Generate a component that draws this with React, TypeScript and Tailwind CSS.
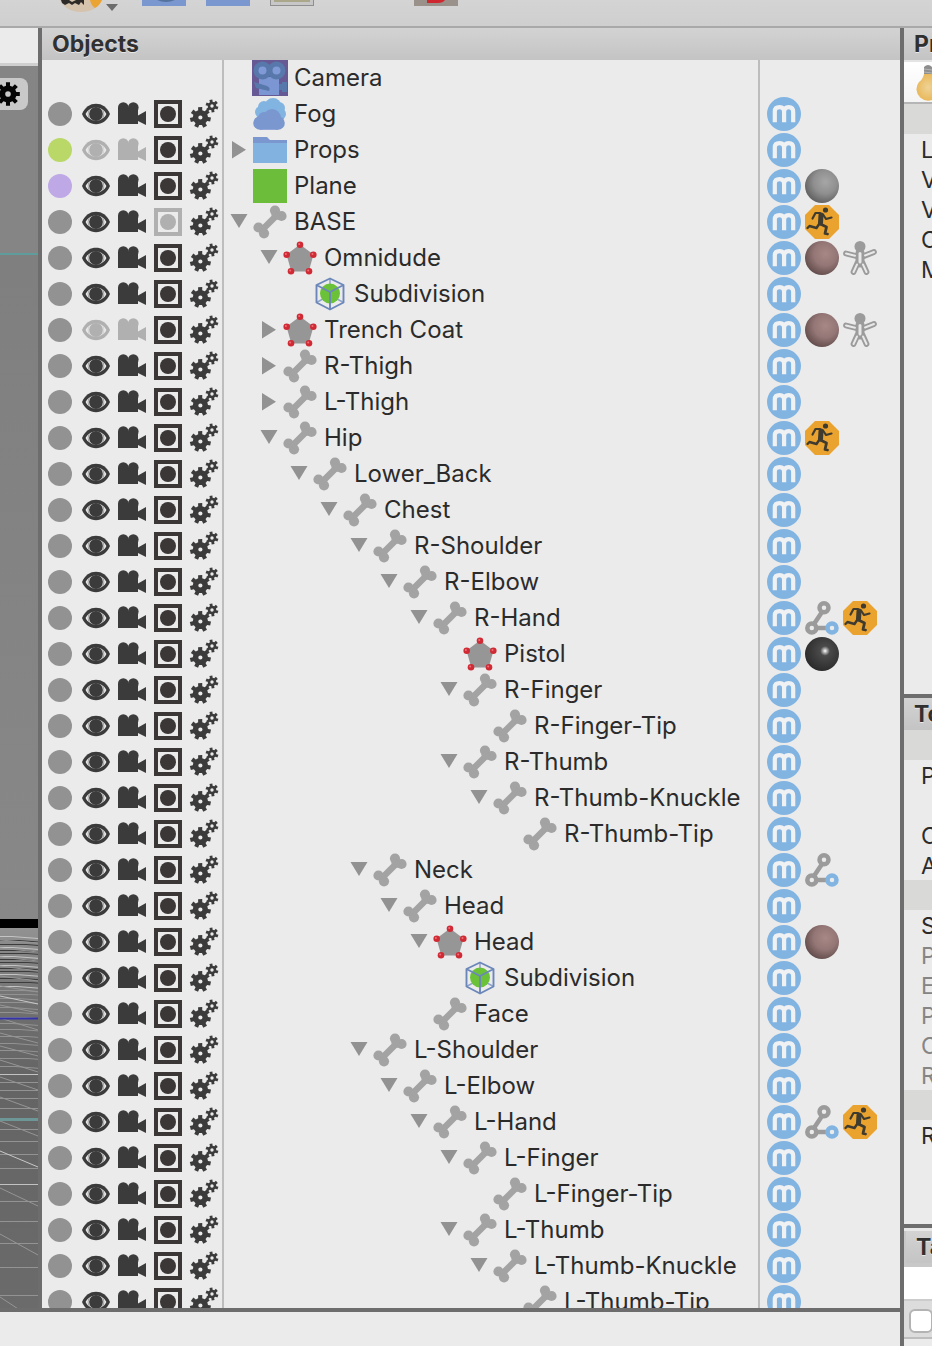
import React from "react";

type Kind = "camera" | "fog" | "folder" | "plane" | "bone" | "mesh" | "subdivision";
type Tag = "m" | "gray" | "skin" | "black" | "run" | "rig" | "ik";
type Item = {
  name: string;
  kind: Kind;
  level: number;
  arrow?: "open" | "closed";
  tags?: Tag[];
  dot?: "green" | "purple";
  hidden?: boolean;
  inactive?: boolean;
  plain?: boolean;
};

const items: Item[] = [
  { name: "Camera", kind: "camera", level: 0, plain: true },
  { name: "Fog", kind: "fog", level: 0 },
  { name: "Props", kind: "folder", level: 0, arrow: "closed", dot: "green", hidden: true },
  { name: "Plane", kind: "plane", level: 0, dot: "purple", tags: ["gray"] },
  { name: "BASE", kind: "bone", level: 0, arrow: "open", inactive: true, tags: ["run"] },
  { name: "Omnidude", kind: "mesh", level: 1, arrow: "open", tags: ["skin", "rig"] },
  { name: "Subdivision", kind: "subdivision", level: 2 },
  { name: "Trench Coat", kind: "mesh", level: 1, arrow: "closed", hidden: true, tags: ["skin", "rig"] },
  { name: "R-Thigh", kind: "bone", level: 1, arrow: "closed" },
  { name: "L-Thigh", kind: "bone", level: 1, arrow: "closed" },
  { name: "Hip", kind: "bone", level: 1, arrow: "open", tags: ["run"] },
  { name: "Lower_Back", kind: "bone", level: 2, arrow: "open" },
  { name: "Chest", kind: "bone", level: 3, arrow: "open" },
  { name: "R-Shoulder", kind: "bone", level: 4, arrow: "open" },
  { name: "R-Elbow", kind: "bone", level: 5, arrow: "open" },
  { name: "R-Hand", kind: "bone", level: 6, arrow: "open", tags: ["ik", "run"] },
  { name: "Pistol", kind: "mesh", level: 7, tags: ["black"] },
  { name: "R-Finger", kind: "bone", level: 7, arrow: "open" },
  { name: "R-Finger-Tip", kind: "bone", level: 8 },
  { name: "R-Thumb", kind: "bone", level: 7, arrow: "open" },
  { name: "R-Thumb-Knuckle", kind: "bone", level: 8, arrow: "open" },
  { name: "R-Thumb-Tip", kind: "bone", level: 9 },
  { name: "Neck", kind: "bone", level: 4, arrow: "open", tags: ["ik"] },
  { name: "Head", kind: "bone", level: 5, arrow: "open" },
  { name: "Head", kind: "mesh", level: 6, arrow: "open", tags: ["skin"] },
  { name: "Subdivision", kind: "subdivision", level: 7 },
  { name: "Face", kind: "bone", level: 6 },
  { name: "L-Shoulder", kind: "bone", level: 4, arrow: "open" },
  { name: "L-Elbow", kind: "bone", level: 5, arrow: "open" },
  { name: "L-Hand", kind: "bone", level: 6, arrow: "open", tags: ["ik", "run"] },
  { name: "L-Finger", kind: "bone", level: 7, arrow: "open" },
  { name: "L-Finger-Tip", kind: "bone", level: 8 },
  { name: "L-Thumb", kind: "bone", level: 7, arrow: "open" },
  { name: "L-Thumb-Knuckle", kind: "bone", level: 8, arrow: "open" },
  { name: "L-Thumb-Tip", kind: "bone", level: 9 },
];

function gearPath(cx: number, cy: number, teeth: number, outer: number, inner: number, hole: number, turn = 0) {
  const step = (Math.PI * 2) / teeth;
  const pts: string[] = [];
  for (let i = 0; i < teeth; i++) {
    const a = i * step + turn;
    const corners: [number, number][] = [
      [inner, a - step * 0.3],
      [outer, a - step * 0.22],
      [outer, a + step * 0.22],
      [inner, a + step * 0.3],
    ];
    corners.forEach(([r, t]) => pts.push(`${(cx + r * Math.cos(t)).toFixed(2)} ${(cy + r * Math.sin(t)).toFixed(2)}`));
  }
  return `M${pts.join("L")}ZM${cx + hole} ${cy}a${hole} ${hole} 0 1 0 ${-2 * hole} 0a${hole} ${hole} 0 1 0 ${2 * hole} 0Z`;
}

const bigGear = gearPath(10.4, 17.5, 7, 10.6, 7.6, 2.1, 0.2);
const smallGear = gearPath(22, 6, 6, 6.5, 4.3, 1.7, 0.35);
const viewGear = gearPath(8, 16, 8, 12, 8.5, 2.8);

function EyeIcon() {
  return (
    <svg viewBox="0 0 28 28" className="size-7">
      <path d="M0 14C3 7 8 3.800 14 3.800s11 3.200 14 10.200c-3 7-8 10.200-14 10.200S3 21 0 14Z" fill="currentColor" />
      <path d="M3.600 14c1.800-4 5.400-6.600 10.400-6.600s8.600 2.600 10.400 6.600c-1.800 4-5.400 6.600-10.400 6.600S5.400 18 3.600 14Z" fill="#ebebeb" />
      <circle cx="14" cy="14" r="7.900" fill="none" stroke="currentColor" strokeWidth="0.700" opacity="0.600" />
      <circle cx="14" cy="14" r="6.900" fill="currentColor" />
    </svg>
  );
}

function FilmIcon() {
  return (
    <svg viewBox="0 0 28 28" className="size-7" fill="currentColor">
      <circle cx="5.300" cy="7.500" r="5.300" />
      <circle cx="15.300" cy="7.500" r="5.300" />
      <path d="M0 8h20v7.500l8-4.500v14l-8-4v3H0Z" />
    </svg>
  );
}

function RenderIcon() {
  return (
    <svg viewBox="0 0 28 28" className="size-7">
      <rect x="2" y="2" width="24" height="24" fill="none" stroke="currentColor" strokeWidth="4" />
      <circle cx="14" cy="14" r="8" fill="currentColor" />
    </svg>
  );
}

function GearsIcon() {
  return (
    <svg viewBox="0 0 28 28" className="size-7 overflow-visible" fill="currentColor" fillRule="evenodd">
      <path d={bigGear} />
      <path d={smallGear} />
    </svg>
  );
}

function KindIcon({ kind }: { kind: Kind }) {
  const box = "size-9 shrink-0";
  if (kind === "camera")
    return (
      <svg viewBox="0 0 36 36" className={box}>
        <rect width="36" height="36" fill="#675a94" />
        <path d="M7 17h20v18H7Z" fill="#7b96d2" />
        <circle cx="10.500" cy="10.500" r="9" fill="#5877ab" />
        <circle cx="24.500" cy="10.500" r="9" fill="#5877ab" />
        <circle cx="10.500" cy="10.500" r="4" fill="#7f9ad6" />
        <circle cx="24.500" cy="10.500" r="4" fill="#7f9ad6" />
        <path d="M2 22l13 4q4 2 2 5l-13-3ZM27 24h3v-2h5v10h-5v-2h-3Z" fill="#5877ab" />
      </svg>
    );
  if (kind === "fog")
    return (
      <svg viewBox="0 0 36 36" className={box}>
        <g fill="#82b4e1">
          <circle cx="21" cy="10.500" r="8.500" />
          <circle cx="12" cy="11" r="6" />
          <circle cx="9" cy="16" r="6" />
          <circle cx="27" cy="12" r="6" />
          <circle cx="28" cy="18" r="6" />
          <path d="M10 10h18v12H10Z" />
        </g>
        <g fill="#7b97d0">
          <circle cx="20" cy="22" r="9" />
          <circle cx="12" cy="22" r="6" />
          <circle cx="8" cy="27" r="6.800" />
          <circle cx="26" cy="27" r="6.800" />
          <path d="M8 24h18v9.800H8Z" />
        </g>
      </svg>
    );
  if (kind === "folder")
    return (
      <svg viewBox="0 0 36 36" className={box}>
        <path d="M1 5h14l3 3h17v8H1Z" fill="#7b97d0" />
        <path d="M1 11h34v20H1Z" fill="#82b2e0" />
      </svg>
    );
  if (kind === "plane")
    return (
      <svg viewBox="0 0 36 36" className={box}>
        <rect x="1" y="1" width="34" height="34" fill="#6bbd3a" />
      </svg>
    );
  if (kind === "bone")
    return (
      <svg viewBox="0 0 36 36" className={box} fill="#a3a3a3">
        <circle cx="23" cy="6.500" r="5.100" />
        <circle cx="29.500" cy="12" r="5.100" />
        <circle cx="6.500" cy="23.500" r="5.100" />
        <circle cx="12" cy="29.300" r="5.100" />
        <path d="M26 10L10 26" stroke="#a3a3a3" strokeWidth="6.500" />
        <path d="M22 6l8 7-5 3-6-5ZM14 20l-7 3 5 7 3-6Z" />
      </svg>
    );
  if (kind === "mesh")
    return (
      <svg viewBox="0 0 36 36" className={box}>
        <path d="M18 4.500L31.500 14.500l-4.800 17h-17.400L4.500 14.500Z" fill="#969696" />
        {[[18, 4.700], [4.700, 14.700], [31.300, 14.700], [9, 31.200], [27, 31.200]].map(([x, y]) => (
          <g key={x}>
            <circle cx={x} cy={y} r="3.300" fill="#d02a35" />
            <circle cx={x - 0.8} cy={y - 0.8} r="1" fill="#ef7078" />
          </g>
        ))}
      </svg>
    );
  return (
    <svg viewBox="0 0 36 36" className={box}>
      <path d="M18 2.500V17M4.500 26.500L18 19l13.500 7.500" stroke="#8ea3cc" strokeWidth="1.500" fill="none" />
      <circle cx="18" cy="17.500" r="10" fill="#6bc238" />
      <path d="M18 2.500L31.500 9v17.500L18 33.500 4.500 26.500V9ZM4.500 9L18 16l13.500-7M18 16v17.500" fill="none" stroke="#6b87ba" strokeWidth="1.900" strokeLinejoin="round" />
    </svg>
  );
}

function TagIcon({ tag }: { tag: Tag }) {
  const box = "h-[34px] w-[34px] shrink-0";
  if (tag === "m")
    return (
      <svg viewBox="0 0 34 34" className={box}>
        <circle cx="17" cy="17" r="17" fill="#82b4e2" />
        <path d="M7.800 25.300V14.500q0-4.300 4.800-4.300q4.500 0 4.500 4.800v10.300M17.100 25.300V15q0-4.800 4.600-4.800q4.500 0 4.500 4.800v10.300" fill="none" stroke="#f0f1f2" strokeWidth="4.200" />
      </svg>
    );
  if (tag === "gray")
    return <span className="h-[34px] w-[34px] shrink-0 rounded-full bg-[radial-gradient(circle_at_60%_38%,#a6a6a6_0%,#8f8f8f_40%,#6a6a6a_68%,#484848_100%)]" />;
  if (tag === "skin")
    return <span className="h-[34px] w-[34px] shrink-0 rounded-full bg-[radial-gradient(circle_at_60%_38%,#a88887_0%,#937675_40%,#6d5655_68%,#3f3232_100%)]" />;
  if (tag === "black")
    return <span className="h-[34px] w-[34px] shrink-0 rounded-full bg-[radial-gradient(circle_at_59%_41%,#ffffff_0%,#b0b0b0_7%,#4a4a4a_17%,#383838_50%,#1c1c1c_100%)]" />;
  if (tag === "run")
    return (
      <svg viewBox="0 0 34 34" className={box}>
        <path d="M10 0h14l10 10v14L24 34H10L0 24V10Z" fill="#eaa32f" />
        <circle cx="20.500" cy="5" r="2.600" fill="#3f3b2f" />
        <g fill="none" stroke="#3f3b2f" strokeWidth="2.200" strokeLinecap="round" strokeLinejoin="round">
          <path d="M15 8L10.500 8 7.500 13.500" />
          <path d="M18 9.500l3 4.500 5.500-1.500" />
          <path d="M15.500 19l6 3-1.500 6.500 2.500 0.500" strokeWidth="2.800" />
          <path d="M14.500 18.500l-3 4.500-7-2-2 2" strokeWidth="2.400" />
          <path d="M16 10L15.500 18" strokeWidth="5" />
        </g>
      </svg>
    );
  if (tag === "rig")
    return (
      <svg viewBox="0 0 34 34" className={box} fill="none" strokeLinecap="round">
        <circle cx="17" cy="5.500" r="5.500" fill="#9b9b9b" />
        <path d="M3 12.500l10 2.500M31 11L21 15M14.500 22l-4 9M19.500 22l4 9" stroke="#9b9b9b" strokeWidth="5.800" />
        <path d="M17 12v10" stroke="#9b9b9b" strokeWidth="9" />
        <path d="M3 12.500l9 2.200M31 11L22 14.500M14 23.500l-3.500 7.500M20 23.500l3.500 7.500" stroke="#e8e8e8" strokeWidth="2" />
        <path d="M17 12.500v8.500" stroke="#e8e8e8" strokeWidth="3" />
      </svg>
    );
  return (
    <svg viewBox="0 0 34 34" className={box} fill="none" strokeWidth="4.500">
      <path d="M17 11L9 23M11 27h12" stroke="#9b9b9b" />
      <circle cx="19" cy="6.800" r="4.500" stroke="#9b9b9b" />
      <circle cx="6.800" cy="27" r="4.500" stroke="#9b9b9b" />
      <circle cx="27" cy="27" r="4.500" stroke="#82b4e2" />
    </svg>
  );
}

function ObjectRow({ item }: { item: Item }) {
  const visibility = item.hidden ? "text-[#b0b0b0]" : "text-[#3b3b3b]";
  const render = item.inactive ? "text-[#b0b0b0]" : "text-[#3b3737]";
  const dot = item.dot === "green" ? "bg-[#b9d867]" : item.dot === "purple" ? "bg-[#bea8e6]" : "bg-[#929292]";
  const cell = "flex size-9 items-center justify-center";
  return (
    <li className="flex h-9 shrink-0">
      <div className="flex w-[182px] shrink-0 border-r-2 border-[#bdbdbd]">
        {!item.plain && (
          <>
            <button aria-label="Layer" className={cell}><span className={`size-6 rounded-full ${dot}`} /></button>
            <button aria-label="Visible in editor" className={`${cell} ${visibility}`}><EyeIcon /></button>
            <button aria-label="Visible in camera" className={`${cell} ${visibility}`}><FilmIcon /></button>
            <button aria-label="Render" className={`${cell} ${render}`}><RenderIcon /></button>
            <button aria-label="Simulate" className={`${cell} text-[#3b3b3b]`}><GearsIcon /></button>
          </>
        )}
      </div>
      <div className="flex min-w-0 flex-1 items-center overflow-hidden">
        <div className="shrink-0" style={{ width: item.level * 30 }} />
        <div className="flex h-9 w-7 shrink-0 items-center justify-center pl-0.5">
          {item.arrow && (
            <button aria-label={`Toggle ${item.name}`}>
              <svg viewBox="0 0 18 18" className="size-[18px]" fill="#929292">
                {item.arrow === "open" ? <path d="M0.500 1h17L9 15Z" /> : <path d="M2 0l14 8.700L2 17.500Z" />}
              </svg>
            </button>
          )}
        </div>
        <KindIcon kind={item.kind} />
        <span className="pl-1.5 text-2xl leading-9 whitespace-nowrap text-[#2b2b2b]">{item.name}</span>
      </div>
      <div className="flex w-[142px] shrink-0 items-center gap-1 border-l-2 border-[#bdbdbd] pl-[7px]">
        {!item.plain && <TagIcon tag="m" />}
        {item.tags?.map((t) => <TagIcon key={t} tag={t} />)}
      </div>
    </li>
  );
}

const farLines = [936, 940, 944, 947, 950, 953, 956, 959, 962, 965, 968, 971, 974, 978, 982, 986, 990, 994, 998, 1002, 1007, 1012, 1017, 1023, 1029, 1036, 1043, 1050, 1058, 1066];
const nearLines = [1074, 1082, 1090, 1098, 1108, 1129, 1141, 1154, 1168, 1184, 1201, 1221, 1243, 1267, 1295];
const slants = [[940, 943], [948, 952], [957, 961], [966, 971], [976, 981], [986, 992], [996, 1004], [1005, 1013], [1018, 1030], [1033, 1043], [1046, 1056], [1060, 1072], [1077, 1090], [1097, 1111], [1121, 1136], [1151, 1167], [1188, 1206], [1234, 1255], [1297, 1322]];

function Viewport() {
  return (
    <div className="flex w-[38px] shrink-0 flex-col overflow-hidden bg-[#6a6a6a]">
      <div className="h-[38px] shrink-0 border-b-3 border-[#cfcfcf] bg-[#ebebeb]" />
      <div className="flex h-[187px] shrink-0 items-start bg-[#858585] pt-3">
        <button aria-label="View settings" className="h-8 w-7 rounded-r-lg bg-[#c9c9c9]">
          <svg viewBox="0 0 28 32" className="h-8 w-7" fill="#050505" fillRule="evenodd"><path d={viewGear} /></svg>
        </button>
      </div>
      <div className="h-0.5 shrink-0 bg-[#5f9c9c]" />
      <div className="h-[664px] shrink-0 bg-linear-to-b from-[#7f7f7f] to-[#888888]" />
      <div className="h-[9px] shrink-0 bg-black" />
      <svg viewBox="0 928 38 380" className="h-[380px] w-[38px] shrink-0" fill="none">
        <defs>
          <linearGradient id="ground" x1="0" y1="0" x2="0" y2="1">
            <stop offset="0" stopColor="#929292" />
            <stop offset="0.200" stopColor="#707070" />
            <stop offset="0.400" stopColor="#646464" />
            <stop offset="1" stopColor="#6b6b6b" />
          </linearGradient>
        </defs>
        <rect y="928" width="38" height="380" fill="url(#ground)" />
        {farLines.map((y, i) => (
          <path key={y} d={`M0 ${y}.5h${12 + (i * 7) % 20}l26 2`} stroke={y < 990 ? (i % 3 ? "#3c3c3c" : "#c4c4c4") : "#929292"} />
        ))}
        {nearLines.map((y) => (
          <path key={y} d={`M0 ${y}.5h38`} stroke={y === 1074 || y === 1184 ? "#c2c2c2" : "#939393"} />
        ))}
        {slants.map(([a, b]) => (
          <path key={a} d={`M0 ${a}L38 ${b}`} stroke={a === 1151 || a === 996 ? "#c8c8c8" : "#959595"} />
        ))}
        <path d="M0 1018.500h38" stroke="#3434a8" strokeWidth="2" />
        <path d="M0 1119.500h38" stroke="#6d9797" strokeWidth="3" />
      </svg>
    </div>
  );
}

function PanelTitle({ children }: { children: React.ReactNode }) {
  return (
    <h2 className="h-8 shrink-0 overflow-hidden bg-linear-to-b from-[#d3d3d3] to-[#c4c4c4] pl-2.5 text-[23px] leading-8 font-bold whitespace-nowrap text-[#303030] [text-shadow:0_1px_0_#e8e8e8]">
      {children}
    </h2>
  );
}

function Field({ children, dim }: { children?: React.ReactNode; dim?: boolean }) {
  return (
    <div className={`h-[30px] shrink-0 overflow-hidden pl-[17px] text-[23px] leading-8 whitespace-nowrap ${dim ? "text-[#858585]" : "text-[#2b2b2b]"}`}>
      {children}
    </div>
  );
}

const Band = () => <div className="h-[30px] shrink-0 bg-[#d9d9d7]" />;

function Sidebar() {
  return (
    <aside className="flex w-8 shrink-0 flex-col overflow-hidden border-l-4 border-[#6d6d6d] bg-[#ebebeb]">
      <section className="flex h-[666px] shrink-0 flex-col">
        <PanelTitle>Pr</PanelTitle>
        <div className="h-11 shrink-0 overflow-hidden border-t-2 border-b-2 border-t-[#e4e4e4] border-b-[#b5b5b5] bg-linear-to-b from-white to-[#f4f4f4] pl-3">
          <svg viewBox="0 0 24 40" className="h-10 w-6">
            <defs>
              <radialGradient id="bulb"><stop offset="0" stopColor="#efd397" /><stop offset="1" stopColor="#e9b95c" /></radialGradient>
            </defs>
            <path d="M8 12h8q1 5 5 8a11.500 11.500 0 1 1-18 0q4-3 5-8Z" fill="url(#bulb)" />
            <path d="M8 5q4-4 8 0v7H8Z" fill="#8e8e8e" />
            <path d="M8 7l8 1M8 10l8 1" stroke="#b5b5b5" />
          </svg>
        </div>
        <Band />
        <Field>L</Field>
        <Field>V</Field>
        <Field>V</Field>
        <Field>C</Field>
        <Field>M</Field>
      </section>
      <section className="flex h-[530px] shrink-0 flex-col border-t-4 border-[#6d6d6d]">
        <PanelTitle>To</PanelTitle>
        <Band />
        <Field>P</Field>
        <Field />
        <Field>C</Field>
        <Field>A</Field>
        <Band />
        <Field>S</Field>
        <Field dim>P</Field>
        <Field dim>E</Field>
        <Field dim>P</Field>
        <Field dim>C</Field>
        <Field dim>R</Field>
        <Band />
        <Field>R</Field>
      </section>
      <section className="flex flex-1 flex-col border-t-4 border-[#6d6d6d]">
        <div className="shrink-0 border-t-3 border-[#e8e8e8] bg-[#c8c8c8] pb-1 pl-0.5">
          <PanelTitle>Ta</PanelTitle>
        </div>
        <div className="h-8 shrink-0 bg-white" />
        <div className="flex h-10 shrink-0 items-end overflow-hidden border-y-2 border-t-[#cccccc] border-b-[#bdbdbd] bg-[#dcdcdc] pb-1 pl-[5px]">
          <input type="checkbox" aria-label="Tag" className="size-6 shrink-0 appearance-none rounded-md border-2 border-[#b3b3b3] bg-white" />
        </div>
      </section>
    </aside>
  );
}

function Toolbar() {
  return (
    <header className="flex h-7 shrink-0 items-start overflow-hidden border-b-2 border-[#a9a9a9] bg-linear-to-b from-[#d4d4d4] to-[#cfcfcf] pl-[60px]">
      <button aria-label="Character" className="flex w-[82px] shrink-0">
        <svg viewBox="0 0 60 14" className="h-[14px] w-[60px]">
          <path d="M0 0h42q-6 12-21 12T0 0Z" fill="#d5c3ad" />
          <path d="M1 0h8l3 2 4-2 8 0v5l-3-3-2 3-4-2-3 2-3-2-4 2-3-2Z" fill="#2e2a28" />
          <path d="M30 0h12q-2 5-7 8-4-3-5-8Z" fill="#eba331" />
          <path d="M46 4h12l-6 7Z" fill="#6c6c6c" />
        </svg>
      </button>
      <button aria-label="Camera" className="mr-5 shrink-0">
        <svg viewBox="0 0 44 7" className="h-[7px] w-11"><path d="M0 0h44v6H0Z" fill="#7b97d0" /><path d="M15 0h18q-9 4-18 0Z" fill="#54739f" /></svg>
      </button>
      <button aria-label="Folder" className="mr-5 shrink-0">
        <svg viewBox="0 0 44 7" className="h-[7px] w-11"><path d="M0 0h44v6H0Z" fill="#7b97d0" /></svg>
      </button>
      <button aria-label="Frame" className="mr-[100px] shrink-0">
        <svg viewBox="0 0 44 7" className="h-[7px] w-11"><path d="M0 0h44v6H0Z" fill="#8f8f92" /><path d="M1 0h42v5H1Z" fill="#c7c7c7" /><path d="M4 0h36v2H4Z" fill="#aaa78a" /></svg>
      </button>
      <button aria-label="Magnet" className="shrink-0">
        <svg viewBox="0 0 44 7" className="h-[7px] w-11"><path d="M0 0h44v6H0Z" fill="#9a918b" /><path d="M13 0h18q-2 3-7 3H13Z" fill="#cf2730" /></svg>
      </button>
    </header>
  );
}

export default function App() {
  return (
    <div className="flex h-screen flex-col overflow-hidden bg-[#ebebeb] font-[Inter,'Liberation_Sans',sans-serif]">
      <Toolbar />
      <div className="flex min-h-0 flex-1">
        <div className="flex min-w-0 flex-1 flex-col">
          <div className="flex min-h-0 flex-1 border-b-4 border-[#6d6d6d]">
            <Viewport />
            <main className="flex min-w-0 flex-1 flex-col border-l-4 border-[#6d6d6d]">
              <PanelTitle>Objects</PanelTitle>
              <ul className="flex min-h-0 flex-1 flex-col overflow-hidden">
                {items.map((item, i) => <ObjectRow key={i} item={item} />)}
              </ul>
            </main>
          </div>
          <footer className="h-[34px] shrink-0" />
        </div>
        <Sidebar />
      </div>
    </div>
  );
}
